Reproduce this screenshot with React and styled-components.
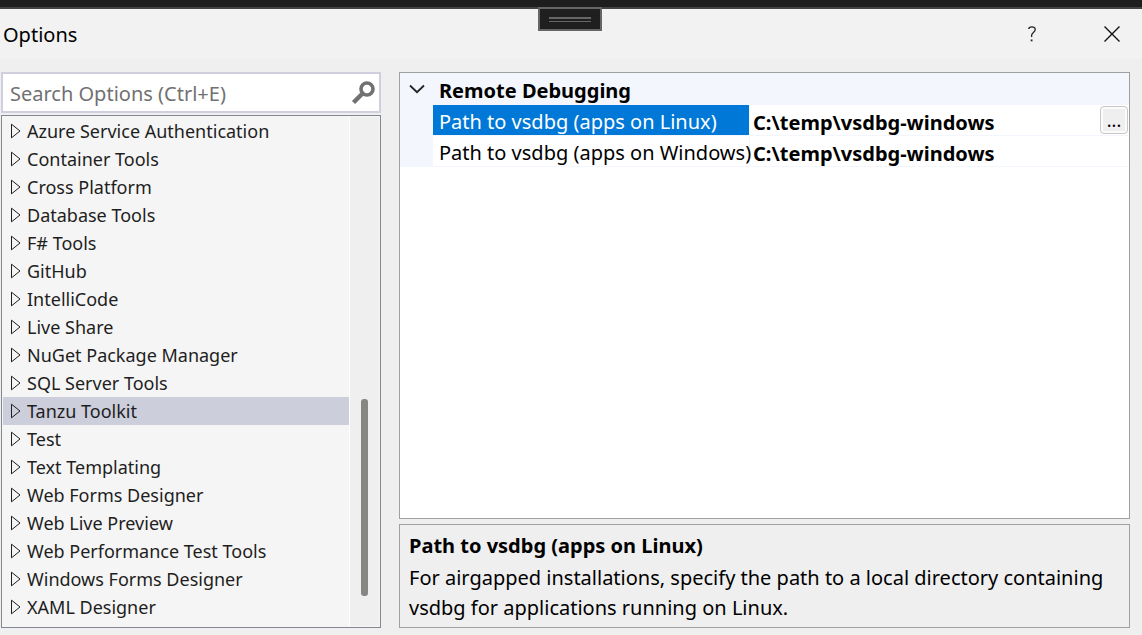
import React, { useState } from "react";
import styled, { createGlobalStyle } from "styled-components";

const GlobalStyle = createGlobalStyle`
  *, *::before, *::after { box-sizing: border-box; }
  html, body, #root { margin: 0; padding: 0; }
  body {
    background: #efefef;
    color: #000;
    font-family: "Noto Sans", "Open Sans", sans-serif;
    font-size: 20px;
  }
  button, input { font: inherit; color: inherit; margin: 0; padding: 0; border: 0; background: none; }
`;

const Dialog = styled.div`
  position: relative;
  display: flex;
  flex-direction: column;
  min-height: 100vh;
`;

const HostStrip = styled.div`
  height: 9px;
  background: #1e1e1e;
  border-bottom: 2px solid #444;
`;

const DragHandle = styled.div`
  position: absolute;
  top: 7px;
  left: 50%;
  margin-left: -33px;
  width: 64px;
  height: 24px;
  display: flex;
  align-items: center;
  justify-content: center;
  background: #1f1f1f;
  border: 2px solid #666;
`;

const Grip = styled.span`
  width: 42px;
  height: 5px;
  border: solid #666;
  border-width: 2px 0 1px;
`;

const TitleBar = styled.header`
  display: flex;
  align-items: center;
  height: 50px;
  padding: 0 10px 0 3px;
  background: #f2f2f2;
`;

const Title = styled.h1`
  flex: 1;
  margin: 0;
  padding-top: 2px;
  font-size: 20px;
  line-height: 28px;
  font-weight: 400;
`;

const CaptionButton = styled.button`
  display: flex;
  align-items: center;
  justify-content: center;
  width: 40px;
  height: 32px;
  margin-left: 40px;
`;

const Content = styled.main`
  flex: 1;
  display: grid;
  grid-template-columns: minmax(240px, 380px) minmax(0, 1fr);
  gap: 18px;
  padding: 13px 12px 7px 1px;
`;

const Column = styled.div`
  display: flex;
  flex-direction: column;
  min-width: 0;
  gap: ${(p) => p.$gap};
`;

const SearchBox = styled.label`
  display: flex;
  align-items: center;
  height: 41px;
  padding: 0 4px 0 7px;
  background: #fff;
  border: 2px solid #cfcfdf;
`;

const SearchInput = styled.input`
  flex: 1;
  min-width: 0;
  padding-top: 2px;
  outline: none;
  &::placeholder { color: #717171; opacity: 1; }
`;

const TreePanel = styled.div`
  flex: 1;
  display: flex;
  padding: 1px;
  background: #f5f5f5;
  border: 1px solid #828790;
`;

const Tree = styled.ul`
  flex: 1;
  min-width: 0;
  margin: 0;
  padding: 0;
  list-style: none;
`;

const TreeRow = styled.button`
  display: flex;
  align-items: center;
  gap: 6px;
  width: 100%;
  height: 28px;
  padding-left: 8px;
  font-size: 18px;
  text-align: left;
  white-space: nowrap;
  color: #1e1e1e;
  background: ${(p) => (p.$selected ? "#cccedb" : "transparent")};
`;

const ScrollTrack = styled.div`
  display: flex;
  flex-direction: column;
  justify-content: flex-end;
  align-items: center;
  width: 30px;
  padding-bottom: 30px;
  background: #efefef;
  border-left: 1px solid #fff;
`;

const ScrollThumb = styled.div`
  width: 7px;
  height: 197px;
  border-radius: 3px;
  background: #868684;
`;

const GridPanel = styled.section`
  flex: 1;
  background: #fff;
  border: 1px solid #a0a0a0;
`;

const PropertyTable = styled.table`
  width: 100%;
  table-layout: fixed;
  border-collapse: separate;
  border-spacing: 0;
`;

const GutterCol = styled.col`
  width: 33px;
`;

const NameCol = styled.col`
  width: 317px;
`;

const GutterCell = styled.td`
  padding: 0;
  background: #f3f6fc;
`;

const CategoryCell = styled.th`
  height: 32px;
  padding: 4px 0 0 6px;
  font-weight: 700;
  line-height: 28px;
  text-align: left;
  background: #f3f6fc;
`;

const NameCell = styled.th`
  height: 31px;
  padding: 4px 0 0 6px;
  font-weight: 400;
  line-height: 26px;
  text-align: left;
  white-space: nowrap;
  background: ${(p) => (p.$selected ? "#0078d7" : "#fff")};
  color: ${(p) => (p.$selected ? "#fff" : "#000")};
  border-right: 1px solid #f3f6fc;
  border-bottom: 1px solid #f3f6fc;
`;

const ValueCell = styled.td`
  padding: 0 1px 0 3px;
  border-bottom: 1px solid #f3f6fc;
`;

const ValueEditor = styled.div`
  display: flex;
  align-items: center;
  height: 30px;
`;

const ValueInput = styled.input`
  flex: 1;
  min-width: 0;
  height: 30px;
  padding-top: 4px;
  font-weight: 700;
  outline: none;
`;

const BrowseButton = styled.button`
  width: 28px;
  height: 28px;
  font-size: 18px;
  line-height: 20px;
  background: #efefef;
  border: 1px solid #c8c8c8;
  border-radius: 4px;
  box-shadow: inset 0 0 0 2px #fbfbfb;
`;

const ExpandButton = styled.button`
  display: flex;
  align-items: center;
  justify-content: center;
  width: 33px;
  height: 32px;
`;

const Description = styled.section`
  min-height: 104px;
  padding: 6px 9px 4px;
  border: 1px solid #a0a0a0;
`;

const DescriptionTitle = styled.h2`
  margin: 0;
  font-size: 20px;
  line-height: 30px;
  font-weight: 700;
`;

const DescriptionText = styled.p`
  margin: 0;
  padding-top: 2px;
  line-height: 30px;
`;

const categories = [
  "Azure Service Authentication",
  "Container Tools",
  "Cross Platform",
  "Database Tools",
  "F# Tools",
  "GitHub",
  "IntelliCode",
  "Live Share",
  "NuGet Package Manager",
  "SQL Server Tools",
  "Tanzu Toolkit",
  "Test",
  "Text Templating",
  "Web Forms Designer",
  "Web Live Preview",
  "Web Performance Test Tools",
  "Windows Forms Designer",
  "XAML Designer",
];

const properties = [
  { name: "Path to vsdbg (apps on Linux)", value: "C:\\temp\\vsdbg-windows", selected: true },
  { name: "Path to vsdbg (apps on Windows)", value: "C:\\temp\\vsdbg-windows" },
];

const TriangleIcon = () => (
  <svg width="10" height="16" viewBox="0 0 10 16" fill="none" stroke="#1e1e1e" aria-hidden="true">
    <path d="M.5 1.2v13.6L9 8z" />
  </svg>
);

const SearchIcon = () => (
  <svg width="24" height="24" viewBox="0 0 24 24" fill="none" stroke="#717171" aria-hidden="true">
    <circle cx="16" cy="8" r="6" strokeWidth="3.6" />
    <path d="M11.500 12.500L2.500 21.500" strokeWidth="4.4" />
  </svg>
);

const CloseIcon = () => (
  <svg width="16" height="16" viewBox="0 0 16 16" fill="none" stroke="#111" strokeWidth="1.4" aria-hidden="true">
    <path d="M.5.5l15 15M15.5.5l-15 15" />
  </svg>
);

const HelpIcon = () => (
  <svg width="8" height="16" viewBox="0 0 8 16" fill="none" stroke="#222" strokeWidth="1.3" aria-hidden="true">
    <path d="M.7 3C.8 1.4 2 .8 3.8.8 6 .8 7.2 1.8 7.2 3.6 7.2 6.5 3.6 6.6 3.6 9.5V11" />
    <path d="M3.600 13.500V15.300" strokeWidth="1.8" />
  </svg>
);

const ChevronIcon = () => (
  <svg width="16" height="10" viewBox="0 0 16 10" fill="none" stroke="#222" strokeWidth="1.8" aria-hidden="true">
    <path d="M1 1.500L8 8.200l7-6.700" />
  </svg>
);

export default function App() {
  const [active, setActive] = useState("Tanzu Toolkit");
  return (
    <>
      <GlobalStyle />
      <Dialog>
        <HostStrip />
        <DragHandle><Grip /></DragHandle>
        <TitleBar>
          <Title>Options</Title>
          <CaptionButton type="button" aria-label="Help"><HelpIcon /></CaptionButton>
          <CaptionButton type="button" aria-label="Close"><CloseIcon /></CaptionButton>
        </TitleBar>
        <Content>
          <Column $gap="2px">
            <SearchBox>
              <SearchInput type="text" placeholder="Search Options (Ctrl+E)" aria-label="Search Options" />
              <SearchIcon />
            </SearchBox>
            <TreePanel>
              <Tree>
                {categories.map((name) => (
                  <li key={name}>
                    <TreeRow type="button" $selected={name === active} onClick={() => setActive(name)}>
                      <TriangleIcon />
                      {name}
                    </TreeRow>
                  </li>
                ))}
              </Tree>
              <ScrollTrack><ScrollThumb /></ScrollTrack>
            </TreePanel>
          </Column>
          <Column $gap="5px">
            <GridPanel>
              <PropertyTable>
                <colgroup>
                  <GutterCol />
                  <NameCol />
                  <col />
                </colgroup>
                <tbody>
                  <tr>
                    <GutterCell>
                      <ExpandButton type="button" aria-label="Collapse Remote Debugging"><ChevronIcon /></ExpandButton>
                    </GutterCell>
                    <CategoryCell colSpan={2}>Remote Debugging</CategoryCell>
                  </tr>
                  {properties.map(({ name, value, selected }) => (
                    <tr key={name}>
                      <GutterCell />
                      <NameCell scope="row" $selected={selected}>{name}</NameCell>
                      <ValueCell>
                        <ValueEditor>
                          <ValueInput type="text" defaultValue={value} aria-label={name} />
                          {selected && <BrowseButton type="button" aria-label="Browse">...</BrowseButton>}
                        </ValueEditor>
                      </ValueCell>
                    </tr>
                  ))}
                </tbody>
              </PropertyTable>
            </GridPanel>
            <Description>
              <DescriptionTitle>Path to vsdbg (apps on Linux)</DescriptionTitle>
              <DescriptionText>
                For airgapped installations, specify the path to a local directory containing vsdbg for
                applications running on Linux.
              </DescriptionText>
            </Description>
          </Column>
        </Content>
      </Dialog>
    </>
  );
}
